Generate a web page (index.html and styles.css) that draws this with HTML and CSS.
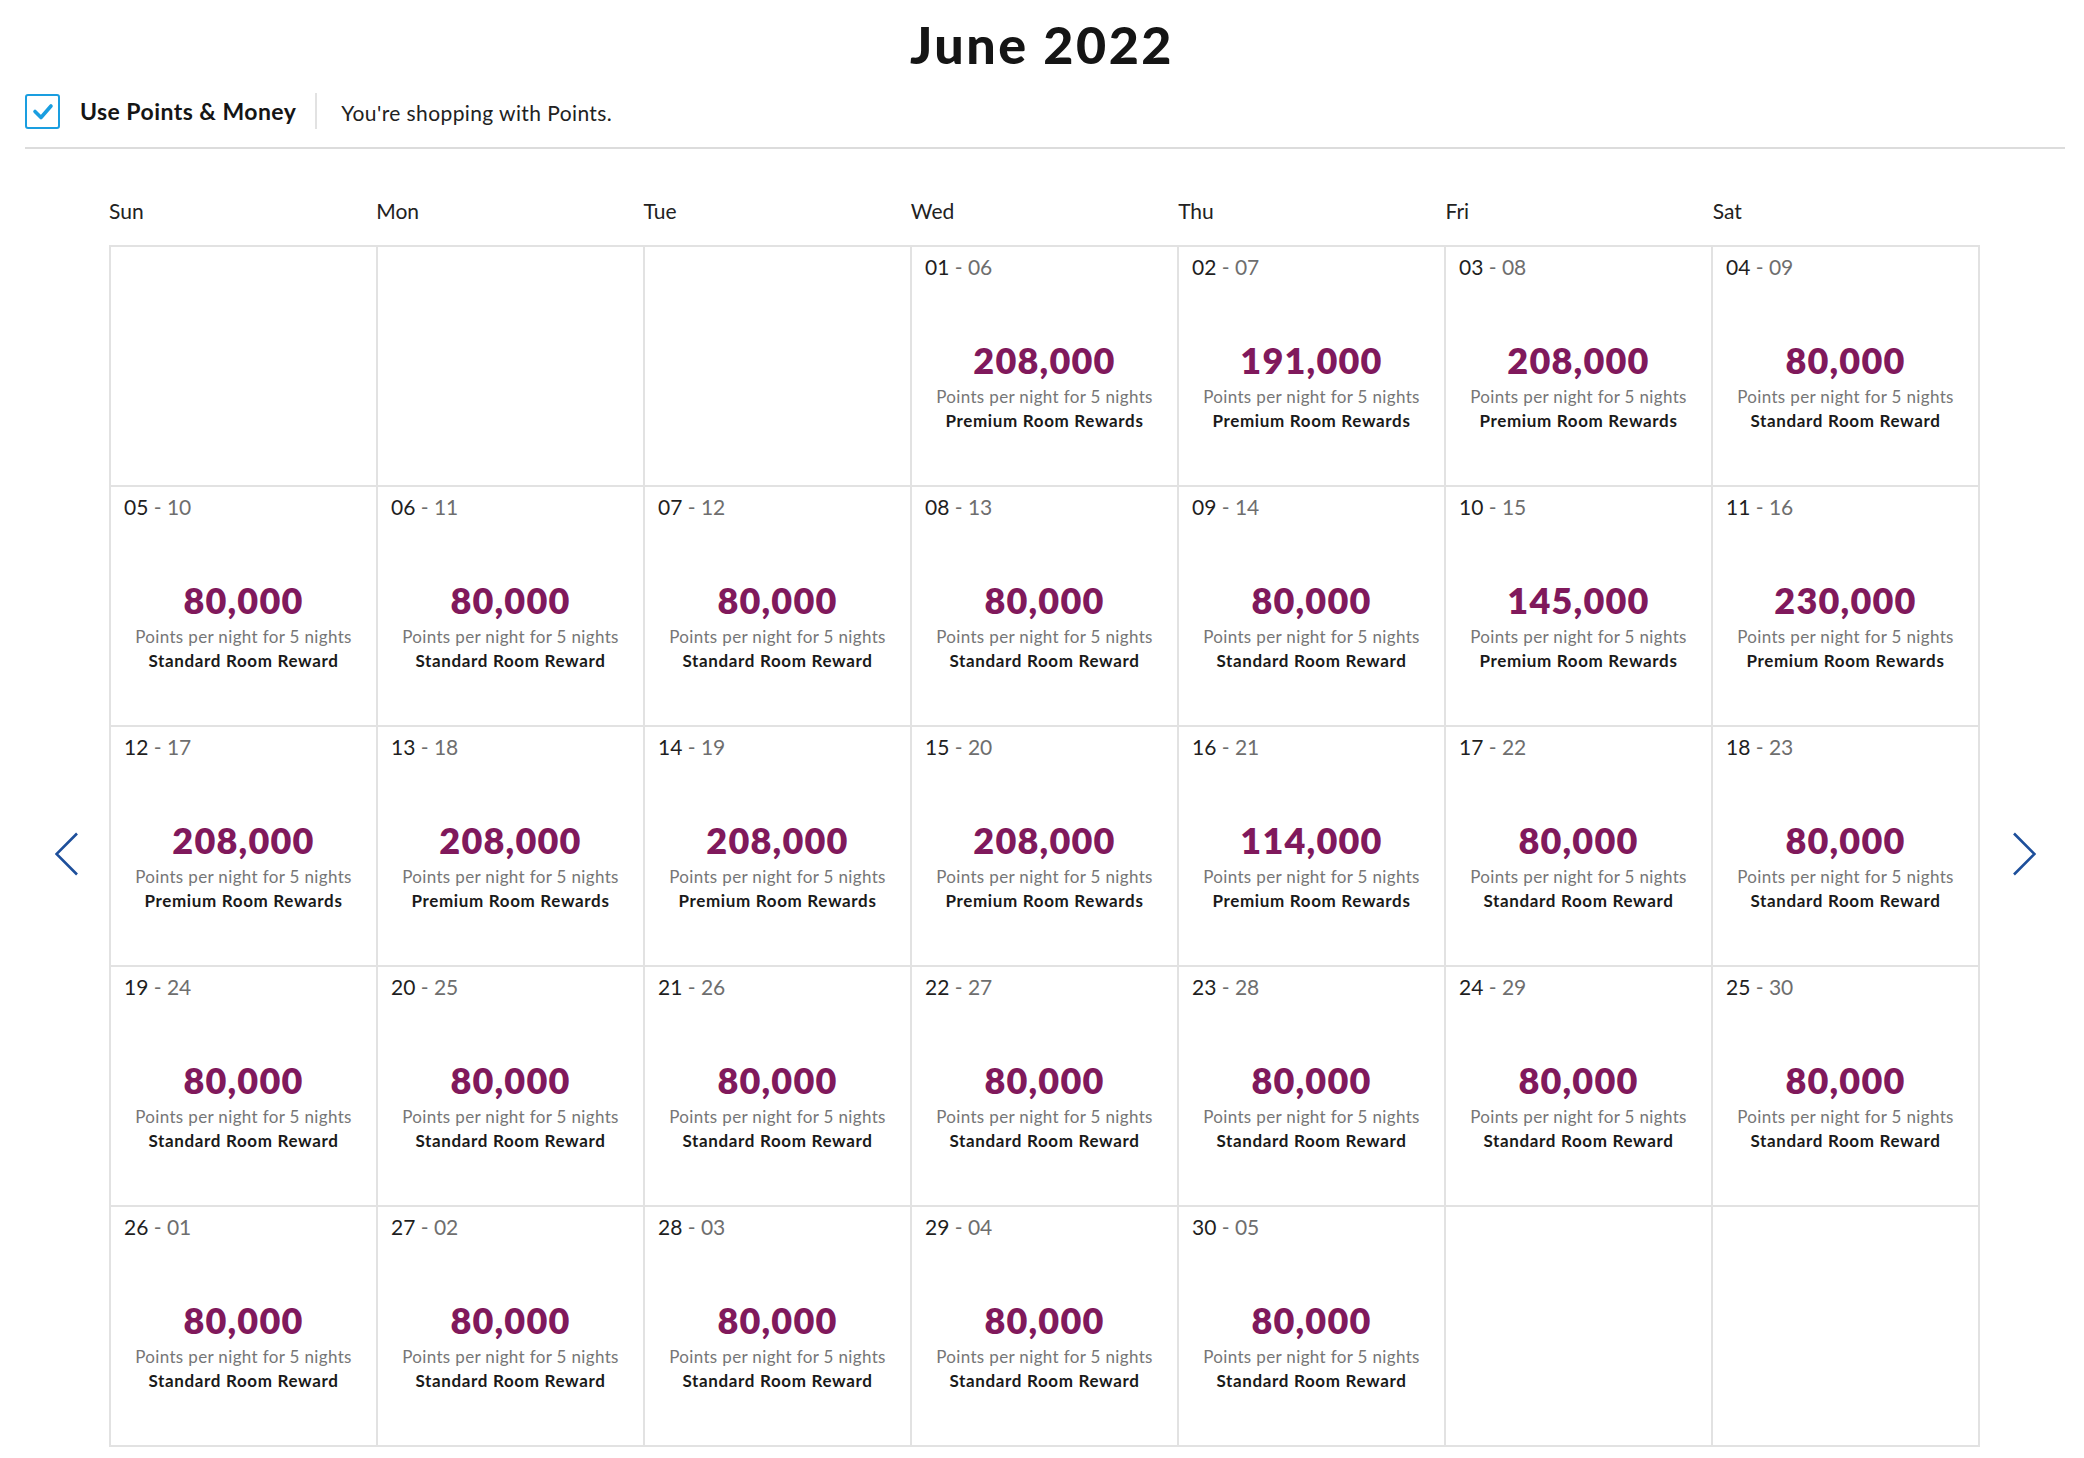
FILE: index.html
```html
<!DOCTYPE html>
<html lang="en">
<head>
<meta charset="utf-8">
<title>June 2022</title>
<link rel="stylesheet" href="styles.css">
</head>
<body>
<div class="page">
  <h1 class="title">June 2022</h1>
  <div class="toolbar">
    <span class="checkbox">
      <svg width="23" height="19" viewBox="0 0 23 19"><polyline points="4,9.5 10,15.5 20,4" fill="none" stroke="#1a9ee0" stroke-width="3.6" stroke-linecap="round" stroke-linejoin="round"/></svg>
    </span>
    <span class="toggle-label">Use Points &amp; Money</span>
    <span class="divider"></span>
    <span class="status">You're shopping with Points.</span>
  </div>

  <div class="calendar">
    <div class="weekdays">
      <div>Sun</div><div>Mon</div><div>Tue</div><div>Wed</div><div>Thu</div><div>Fri</div><div>Sat</div>
    </div>
    <div class="nav nav-prev">
      <svg width="24" height="44" viewBox="0 0 24 44"><polyline points="22,1.5 1.5,22 22,42.5" fill="none" stroke="#1d4f9b" stroke-width="2.6"/></svg>
    </div>
    <div class="grid">
      <div class="cell empty"></div>
      <div class="cell empty"></div>
      <div class="cell empty"></div>
      <div class="cell"><div class="dates"><span class="d1">01</span> - 06</div><div class="price">208,000</div><div class="note">Points per night for 5 nights</div><div class="type">Premium Room Rewards</div></div>
      <div class="cell"><div class="dates"><span class="d1">02</span> - 07</div><div class="price">191,000</div><div class="note">Points per night for 5 nights</div><div class="type">Premium Room Rewards</div></div>
      <div class="cell"><div class="dates"><span class="d1">03</span> - 08</div><div class="price">208,000</div><div class="note">Points per night for 5 nights</div><div class="type">Premium Room Rewards</div></div>
      <div class="cell"><div class="dates"><span class="d1">04</span> - 09</div><div class="price">80,000</div><div class="note">Points per night for 5 nights</div><div class="type">Standard Room Reward</div></div>

      <div class="cell"><div class="dates"><span class="d1">05</span> - 10</div><div class="price">80,000</div><div class="note">Points per night for 5 nights</div><div class="type">Standard Room Reward</div></div>
      <div class="cell"><div class="dates"><span class="d1">06</span> - 11</div><div class="price">80,000</div><div class="note">Points per night for 5 nights</div><div class="type">Standard Room Reward</div></div>
      <div class="cell"><div class="dates"><span class="d1">07</span> - 12</div><div class="price">80,000</div><div class="note">Points per night for 5 nights</div><div class="type">Standard Room Reward</div></div>
      <div class="cell"><div class="dates"><span class="d1">08</span> - 13</div><div class="price">80,000</div><div class="note">Points per night for 5 nights</div><div class="type">Standard Room Reward</div></div>
      <div class="cell"><div class="dates"><span class="d1">09</span> - 14</div><div class="price">80,000</div><div class="note">Points per night for 5 nights</div><div class="type">Standard Room Reward</div></div>
      <div class="cell"><div class="dates"><span class="d1">10</span> - 15</div><div class="price">145,000</div><div class="note">Points per night for 5 nights</div><div class="type">Premium Room Rewards</div></div>
      <div class="cell"><div class="dates"><span class="d1">11</span> - 16</div><div class="price">230,000</div><div class="note">Points per night for 5 nights</div><div class="type">Premium Room Rewards</div></div>

      <div class="cell"><div class="dates"><span class="d1">12</span> - 17</div><div class="price">208,000</div><div class="note">Points per night for 5 nights</div><div class="type">Premium Room Rewards</div></div>
      <div class="cell"><div class="dates"><span class="d1">13</span> - 18</div><div class="price">208,000</div><div class="note">Points per night for 5 nights</div><div class="type">Premium Room Rewards</div></div>
      <div class="cell"><div class="dates"><span class="d1">14</span> - 19</div><div class="price">208,000</div><div class="note">Points per night for 5 nights</div><div class="type">Premium Room Rewards</div></div>
      <div class="cell"><div class="dates"><span class="d1">15</span> - 20</div><div class="price">208,000</div><div class="note">Points per night for 5 nights</div><div class="type">Premium Room Rewards</div></div>
      <div class="cell"><div class="dates"><span class="d1">16</span> - 21</div><div class="price">114,000</div><div class="note">Points per night for 5 nights</div><div class="type">Premium Room Rewards</div></div>
      <div class="cell"><div class="dates"><span class="d1">17</span> - 22</div><div class="price">80,000</div><div class="note">Points per night for 5 nights</div><div class="type">Standard Room Reward</div></div>
      <div class="cell"><div class="dates"><span class="d1">18</span> - 23</div><div class="price">80,000</div><div class="note">Points per night for 5 nights</div><div class="type">Standard Room Reward</div></div>

      <div class="cell"><div class="dates"><span class="d1">19</span> - 24</div><div class="price">80,000</div><div class="note">Points per night for 5 nights</div><div class="type">Standard Room Reward</div></div>
      <div class="cell"><div class="dates"><span class="d1">20</span> - 25</div><div class="price">80,000</div><div class="note">Points per night for 5 nights</div><div class="type">Standard Room Reward</div></div>
      <div class="cell"><div class="dates"><span class="d1">21</span> - 26</div><div class="price">80,000</div><div class="note">Points per night for 5 nights</div><div class="type">Standard Room Reward</div></div>
      <div class="cell"><div class="dates"><span class="d1">22</span> - 27</div><div class="price">80,000</div><div class="note">Points per night for 5 nights</div><div class="type">Standard Room Reward</div></div>
      <div class="cell"><div class="dates"><span class="d1">23</span> - 28</div><div class="price">80,000</div><div class="note">Points per night for 5 nights</div><div class="type">Standard Room Reward</div></div>
      <div class="cell"><div class="dates"><span class="d1">24</span> - 29</div><div class="price">80,000</div><div class="note">Points per night for 5 nights</div><div class="type">Standard Room Reward</div></div>
      <div class="cell"><div class="dates"><span class="d1">25</span> - 30</div><div class="price">80,000</div><div class="note">Points per night for 5 nights</div><div class="type">Standard Room Reward</div></div>

      <div class="cell"><div class="dates"><span class="d1">26</span> - 01</div><div class="price">80,000</div><div class="note">Points per night for 5 nights</div><div class="type">Standard Room Reward</div></div>
      <div class="cell"><div class="dates"><span class="d1">27</span> - 02</div><div class="price">80,000</div><div class="note">Points per night for 5 nights</div><div class="type">Standard Room Reward</div></div>
      <div class="cell"><div class="dates"><span class="d1">28</span> - 03</div><div class="price">80,000</div><div class="note">Points per night for 5 nights</div><div class="type">Standard Room Reward</div></div>
      <div class="cell"><div class="dates"><span class="d1">29</span> - 04</div><div class="price">80,000</div><div class="note">Points per night for 5 nights</div><div class="type">Standard Room Reward</div></div>
      <div class="cell"><div class="dates"><span class="d1">30</span> - 05</div><div class="price">80,000</div><div class="note">Points per night for 5 nights</div><div class="type">Standard Room Reward</div></div>
      <div class="cell empty"></div>
      <div class="cell empty"></div>
    </div>
    <div class="nav nav-next">
      <svg width="24" height="44" viewBox="0 0 24 44"><polyline points="2,1.5 22.5,22 2,42.5" fill="none" stroke="#1d4f9b" stroke-width="2.6"/></svg>
    </div>
  </div>
</div>
</body>
</html>
```

FILE: styles.css
```css
* { box-sizing: border-box; }

html, body {
  margin: 0;
  padding: 0;
  background: #fff;
}

body {
  font-family: "Lato", "Liberation Sans", sans-serif;
  color: #1f1f1f;
}

.page {
  width: 2084px;
}

.title {
  margin: 14px 0 0;
  text-align: center;
  font-size: 52px;
  line-height: 60px;
  font-weight: 900;
  color: #151515;
  letter-spacing: 2.5px;
}

.toolbar {
  display: flex;
  align-items: center;
  margin-left: 25px;
  width: 2040px;
  padding: 19px 0 18px;
  border-bottom: 2px solid #dcdcdc;
}

.checkbox {
  width: 35px;
  height: 35px;
  border: 2px solid #1a9ee0;
  border-radius: 3px;
  display: flex;
  align-items: center;
  justify-content: center;
  flex: none;
}

.toggle-label {
  margin-left: 20px;
  font-size: 23px;
  font-weight: 700;
  color: #151515;
  letter-spacing: 0.45px;
}

.divider {
  width: 2px;
  height: 36px;
  background: #e2e2e2;
  margin: 0 24px 0 19px;
}

.status {
  font-size: 21px;
  color: #222;
  padding-top: 3px;
  letter-spacing: 0.4px;
}

.calendar {
  display: grid;
  grid-template-columns: 109px 1871px 104px;
  grid-template-rows: auto auto;
}

.weekdays {
  grid-column: 2;
  grid-row: 1;
  display: grid;
  grid-template-columns: repeat(7, 1fr);
  padding: 50px 0 22px;
  font-size: 21px;
  line-height: 24px;
  color: #222;
}

.nav {
  grid-row: 2;
  align-self: center;
  margin-top: 16px;
  display: flex;
}

.nav-prev {
  grid-column: 1;
  padding-left: 55px;
}

.nav-next {
  grid-column: 3;
  padding-left: 32px;
}

.grid {
  grid-column: 2;
  grid-row: 2;
  display: grid;
  grid-template-columns: repeat(7, 1fr);
  grid-auto-rows: 240px;
  border-top: 2px solid #e2e2e2;
  border-left: 2px solid #e2e2e2;
}

.cell {
  border-right: 2px solid #e2e2e2;
  border-bottom: 2px solid #e2e2e2;
  padding: 8px 0 0 13px;
  display: flex;
  flex-direction: column;
  align-items: center;
}

.dates {
  align-self: flex-start;
  font-size: 21px;
  line-height: 24px;
  color: #6e6e6e;
}

.d1 {
  color: #1f1f1f;
}

.price {
  margin: 61px 13px 0 0;
  font-size: 36px;
  line-height: 40px;
  font-weight: 800;
  color: #80195c;
  letter-spacing: 1.2px;
}

.note {
  margin: 5px 13px 0 0;
  font-size: 17px;
  line-height: 24px;
  color: #767676;
  letter-spacing: 0.35px;
}

.type {
  margin-right: 13px;
  font-size: 17px;
  line-height: 24px;
  font-weight: 700;
  color: #1a1a1a;
  letter-spacing: 0.65px;
}
```
